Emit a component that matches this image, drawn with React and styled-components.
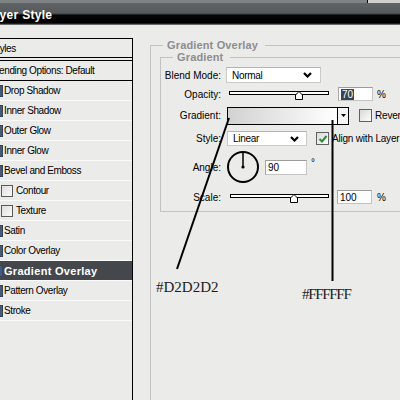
import React from "react";
import styled, { createGlobalStyle } from "styled-components";

const GlobalStyle = createGlobalStyle`
  html, body {
    margin: 0;
    padding: 0;
    background: #ebebea;
    overflow: hidden;
  }
  body {
    font-family: "Liberation Sans", Arial, sans-serif;
    font-size: 10px;
    color: #000;
  }
`;

const Window = styled.div`
  position: relative;
  width: 400px;
  height: 400px;
  overflow: hidden;
  display: flex;
  flex-direction: column;
  background: #ebebea;
`;

/* ---------- title bar ---------- */

const TitleBar = styled.div`
  flex: 0 0 25px;
  display: flex;
  flex-direction: column;
`;

const TitleEdge = styled.div`
  display: flex;
  height: 3px;
  background: #808386;
`;

const NeighbourEdge = styled.div`
  margin-left: auto;
  width: 32px;
  background: #cfcfcf;
  border-left: 1px solid #000;
`;

const Caption = styled.div`
  flex: 1;
  display: flex;
  align-items: flex-start;
  padding-top: 6px;
  box-sizing: border-box;
  background: linear-gradient(
    to bottom,
    #606467 0px,
    #55595c 10px,
    #3c3f42 11px,
    #050505 12px,
    #000 20px,
    #3a3a3a 21px,
    #9a9a9a 22px
  );
`;

const CaptionText = styled.span`
  margin-left: -15px;
  font-weight: 700;
  font-size: 12px;
  line-height: 12px;
  letter-spacing: 0.3px;
  color: #fff;
  white-space: nowrap;
`;

/* ---------- body ---------- */

const Body = styled.div`
  flex: 1;
  display: flex;
  padding-top: 13px;
  min-height: 0;
`;

/* ---------- style list ---------- */

const StyleList = styled.div`
  flex: 0 0 145px;
  margin-left: -13px;
  border-right: 1px solid #000;
  display: flex;
  flex-direction: column;
  letter-spacing: -0.4px;
  white-space: nowrap;
`;

const ListHeader = styled.div`
  display: flex;
  align-items: center;
  height: ${(p) => p.$h}px;
  margin-bottom: ${(p) => p.$mb || 0}px;
  padding-left: 4px;
  border-top: 1px solid #000;
  border-bottom: 1px solid #000;
`;

const ListRow = styled.div`
  display: flex;
  align-items: center;
  gap: 1px;
  height: 19px;
  padding-left: 4px;
  border-bottom: 1px solid #fafafa;
  background: ${(p) => (p.$selected ? "#44484c" : "transparent")};
  color: ${(p) => (p.$selected ? "#fff" : "#000")};
  font-weight: ${(p) => (p.$selected ? 700 : 400)};
  font-size: ${(p) => (p.$selected ? "11px" : "10px")};
  letter-spacing: ${(p) => (p.$selected ? "0.3px" : "-0.4px")};
`;

const ListCheck = styled.span`
  flex: 0 0 auto;
  box-sizing: border-box;
  width: 12px;
  height: 12px;
  margin-left: ${(p) => (p.$sub ? 10 : 0)}px;
  margin-right: ${(p) => (p.$sub ? 2 : 0)}px;
  border: 1px solid ${(p) => (p.$sub ? "#5a5a5a" : "#33435a")};
  background: ${(p) =>
    p.$sub
      ? "linear-gradient(135deg, #dedede, #fbfbfb)"
      : "linear-gradient(to right, #dfe3e8 0, #dfe3e8 8px, #465a74 8px)"};
`;

/* ---------- settings ---------- */

const Settings = styled.div`
  flex: 0 0 300px;
  margin-left: 17px;
  padding-top: 3px;
  display: flex;
  flex-direction: column;
`;

const Group = styled.fieldset`
  margin: 0;
  min-width: 0;
  padding: ${(p) => p.$pt}px 0 ${(p) => p.$pb}px ${(p) => p.$pl}px;
  border: 1px solid #c2c2c2;
  border-right: none;
  ${(p) => (p.$open ? "border-bottom: none; flex: 1;" : "")}
`;

const GroupTitle = styled.legend`
  margin-left: ${(p) => p.$offset}px;
  padding: 0 7px 0 4px;
  font-weight: 700;
  font-size: 11px;
  line-height: 8px;
  letter-spacing: 0.15px;
  color: #8d8d8d;
`;

const Row = styled.div`
  display: flex;
  align-items: center;
  height: ${(p) => p.$h}px;
  white-space: nowrap;
`;

const Label = styled.span`
  flex: 0 0 60px;
  margin-right: 6px;
  text-align: right;
`;

const Select = styled.div`
  flex: 0 0 auto;
  box-sizing: border-box;
  display: flex;
  align-items: center;
  justify-content: space-between;
  width: ${(p) => p.$w}px;
  height: ${(p) => p.$h}px;
  margin-left: ${(p) => p.$ml || 0}px;
  padding: 0 ${(p) => p.$pr}px 0 5px;
  background: #fff;
  border: 1px solid #cacaca;
  border-top-color: #b4b4b4;
  letter-spacing: -0.3px;
`;

const SliderBox = styled.div`
  position: relative;
  flex: 0 0 auto;
  width: ${(p) => p.$w}px;
  height: 11px;
  margin-left: ${(p) => p.$ml}px;
`;

const Track = styled.div`
  box-sizing: border-box;
  height: 4px;
  margin-top: 2px;
  border: 1px solid #000;
  background: #fff;
`;

const Thumb = styled.svg`
  position: absolute;
  top: 2px;
  display: block;
`;

const Field = styled.div`
  flex: 0 0 auto;
  box-sizing: border-box;
  display: flex;
  align-items: center;
  width: ${(p) => p.$w}px;
  height: ${(p) => p.$h}px;
  margin-left: ${(p) => p.$ml}px;
  padding-left: 2px;
  background: #fff;
  border: 1px solid #c4c4c4;
  border-top-color: #9c9c9c;
  border-left-color: #a8a8a8;
`;

const Selection = styled.span`
  padding: 0 1px;
  line-height: 11px;
  background: #3b4452;
  color: #fff;
`;

const Unit = styled.span`
  margin-left: ${(p) => p.$ml}px;
  ${(p) => (p.$raised ? "margin-bottom: 9px;" : "")}
`;

const GradientPicker = styled.div`
  flex: 0 0 auto;
  box-sizing: border-box;
  display: flex;
  width: 122px;
  height: 18px;
  border: 1px solid #000;
  background: #fff;
`;

const Ramp = styled.div`
  flex: 1;
  border-right: 1px solid #000;
  background: linear-gradient(to right, ${(p) => p.$from}, ${(p) => p.$to});
`;

const RampArrow = styled.div`
  width: 10px;
  display: flex;
  align-items: center;
  justify-content: center;
  background: #f4f4f4;
`;

const Check = styled.span`
  flex: 0 0 auto;
  box-sizing: border-box;
  display: inline-flex;
  align-items: center;
  justify-content: center;
  width: ${(p) => p.$s}px;
  height: ${(p) => p.$s}px;
  margin-left: ${(p) => p.$ml}px;
  border: 1px solid #606060;
  background: linear-gradient(135deg, #d9d9d6, #fdfdfd);
`;

const CheckText = styled.span`
  margin-left: 3px;
  letter-spacing: -0.2px;
`;

const Dial = styled.svg`
  flex: 0 0 auto;
  display: block;
  margin-left: -1px;
`;

/* ---------- notes drawn over the dialog ---------- */

const Annotations = styled.div`
  position: absolute;
  inset: 0;
  pointer-events: none;
`;

const NoteLines = styled.svg`
  position: absolute;
  left: 0;
  top: 0;
`;

const Note = styled.span`
  position: absolute;
  font-family: "Liberation Serif", "Times New Roman", serif;
  font-size: 15px;
  line-height: 15px;
  color: #1c1c1c;
  white-space: nowrap;
  letter-spacing: ${(p) => p.$ls || 0}px;
`;

/* ---------- small drawings ---------- */

const Chevron = () => (
  <svg width="9" height="6" viewBox="0 0 9 6">
    <polyline points="1,1 4.5,4.5 8,1" fill="none" stroke="#000" strokeWidth="2.2" />
  </svg>
);

const DownTriangle = () => (
  <svg width="5" height="3" viewBox="0 0 5 3">
    <polygon points="0,0 5,0 2.5,3" fill="#000" />
  </svg>
);

const CheckMark = () => (
  <svg width="10" height="10" viewBox="0 0 10 10">
    <polyline points="1.5,5 4,7.5 8.5,2" fill="none" stroke="#2f8a38" strokeWidth="2" />
  </svg>
);

const Slider = ({ width, offset, value, min, max }) => {
  const left = ((value - min) / (max - min)) * width - 4;
  return (
    <SliderBox $w={width} $ml={offset}>
      <Track />
      <Thumb width="8" height="9" viewBox="0 0 8 9" style={{ left: `${left}px` }}>
        <path d="M0.5 8.5 V4 L4 0.5 L7.5 4 V8.5 Z" fill="#fff" stroke="#000" strokeWidth="1" />
      </Thumb>
    </SliderBox>
  );
};

const AngleDial = ({ angle }) => {
  const rad = (angle * Math.PI) / 180;
  const x = 17 + Math.cos(rad) * 15;
  const y = 17 - Math.sin(rad) * 15;
  return (
    <Dial width="34" height="34" viewBox="0 0 34 34">
      <circle cx="17" cy="17" r="15" fill="none" stroke="#000" strokeWidth="2" />
      <line x1="17" y1="17" x2={x} y2={y} stroke="#000" strokeWidth="1.5" />
      <circle cx="17" cy="17" r="1.6" fill="#000" />
    </Dial>
  );
};

const effects = [
  { name: "Drop Shadow" },
  { name: "Inner Shadow" },
  { name: "Outer Glow" },
  { name: "Inner Glow" },
  { name: "Bevel and Emboss" },
  { name: "Contour", sub: true },
  { name: "Texture", sub: true },
  { name: "Satin" },
  { name: "Color Overlay" },
  { name: "Gradient Overlay", selected: true },
  { name: "Pattern Overlay" },
  { name: "Stroke" },
];

export default function App() {
  return (
    <Window>
      <GlobalStyle />
      <TitleBar>
        <TitleEdge>
          <NeighbourEdge />
        </TitleEdge>
        <Caption>
          <CaptionText>Layer Style</CaptionText>
        </Caption>
      </TitleBar>

      <Body>
        <StyleList>
          <ListHeader $h={18} $mb={2}>Styles</ListHeader>
          <ListHeader $h={19}>Blending Options: Default</ListHeader>
          {effects.map((fx) => (
            <ListRow key={fx.name} $selected={fx.selected}>
              <ListCheck $sub={fx.sub} />
              <span>{fx.name}</span>
            </ListRow>
          ))}
        </StyleList>

        <Settings>
          <Group $open $pt={4} $pb={0} $pl={9}>
            <GroupTitle $offset={3}>Gradient Overlay</GroupTitle>
            <Group $pt={5} $pb={1} $pl={0}>
              <GroupTitle $offset={12}>Gradient</GroupTitle>

              <Row $h={18}>
                <Label>Blend Mode:</Label>
                <Select $w={95} $h={16} $ml={-1} $pr={8}>
                  <span>Normal</span>
                  <Chevron />
                </Select>
              </Row>

              <Row $h={20}>
                <Label>Opacity:</Label>
                <Slider width={100} offset={2} value={70} min={0} max={100} />
                <Field $w={35} $h={14} $ml={9}>
                  <Selection>70</Selection>
                </Field>
                <Unit $ml={4}>%</Unit>
              </Row>

              <Row $h={23}>
                <Label>Gradient:</Label>
                <GradientPicker>
                  <Ramp $from="#d2d2d2" $to="#ffffff" />
                  <RampArrow>
                    <DownTriangle />
                  </RampArrow>
                </GradientPicker>
                <Check $s={13} $ml={10} />
                <CheckText>Reverse</CheckText>
              </Row>

              <Row $h={23}>
                <Label>Style:</Label>
                <Select $w={80} $h={15} $pr={7}>
                  <span>Linear</span>
                  <Chevron />
                </Select>
                <Check $s={13} $ml={9}>
                  <CheckMark />
                </Check>
                <CheckText>Align with Layer</CheckText>
              </Row>

              <Row $h={34}>
                <Label>Angle:</Label>
                <AngleDial angle={90} />
                <Field $w={42} $h={15} $ml={5}>
                  90
                </Field>
                <Unit $ml={4} $raised>
                  °
                </Unit>
              </Row>

              <Row $h={26}>
                <Label>Scale:</Label>
                <Slider width={99} offset={3} value={100} min={10} max={150} />
                <Field $w={35} $h={14} $ml={8}>
                  100
                </Field>
                <Unit $ml={5}>%</Unit>
              </Row>
            </Group>
          </Group>
        </Settings>
      </Body>

      <Annotations>
        <NoteLines width="400" height="400" viewBox="0 0 400 400">
          <line x1="229" y1="118" x2="177" y2="269" stroke="#000" strokeWidth="2" />
          <line x1="332.5" y1="120" x2="332.5" y2="281" stroke="#000" strokeWidth="2" />
        </NoteLines>
        <Note style={{ left: 156, top: 280 }}>#D2D2D2</Note>
        <Note style={{ left: 302, top: 287 }} $ls={-1.3}>
          #FFFFFF
        </Note>
      </Annotations>
    </Window>
  );
}
